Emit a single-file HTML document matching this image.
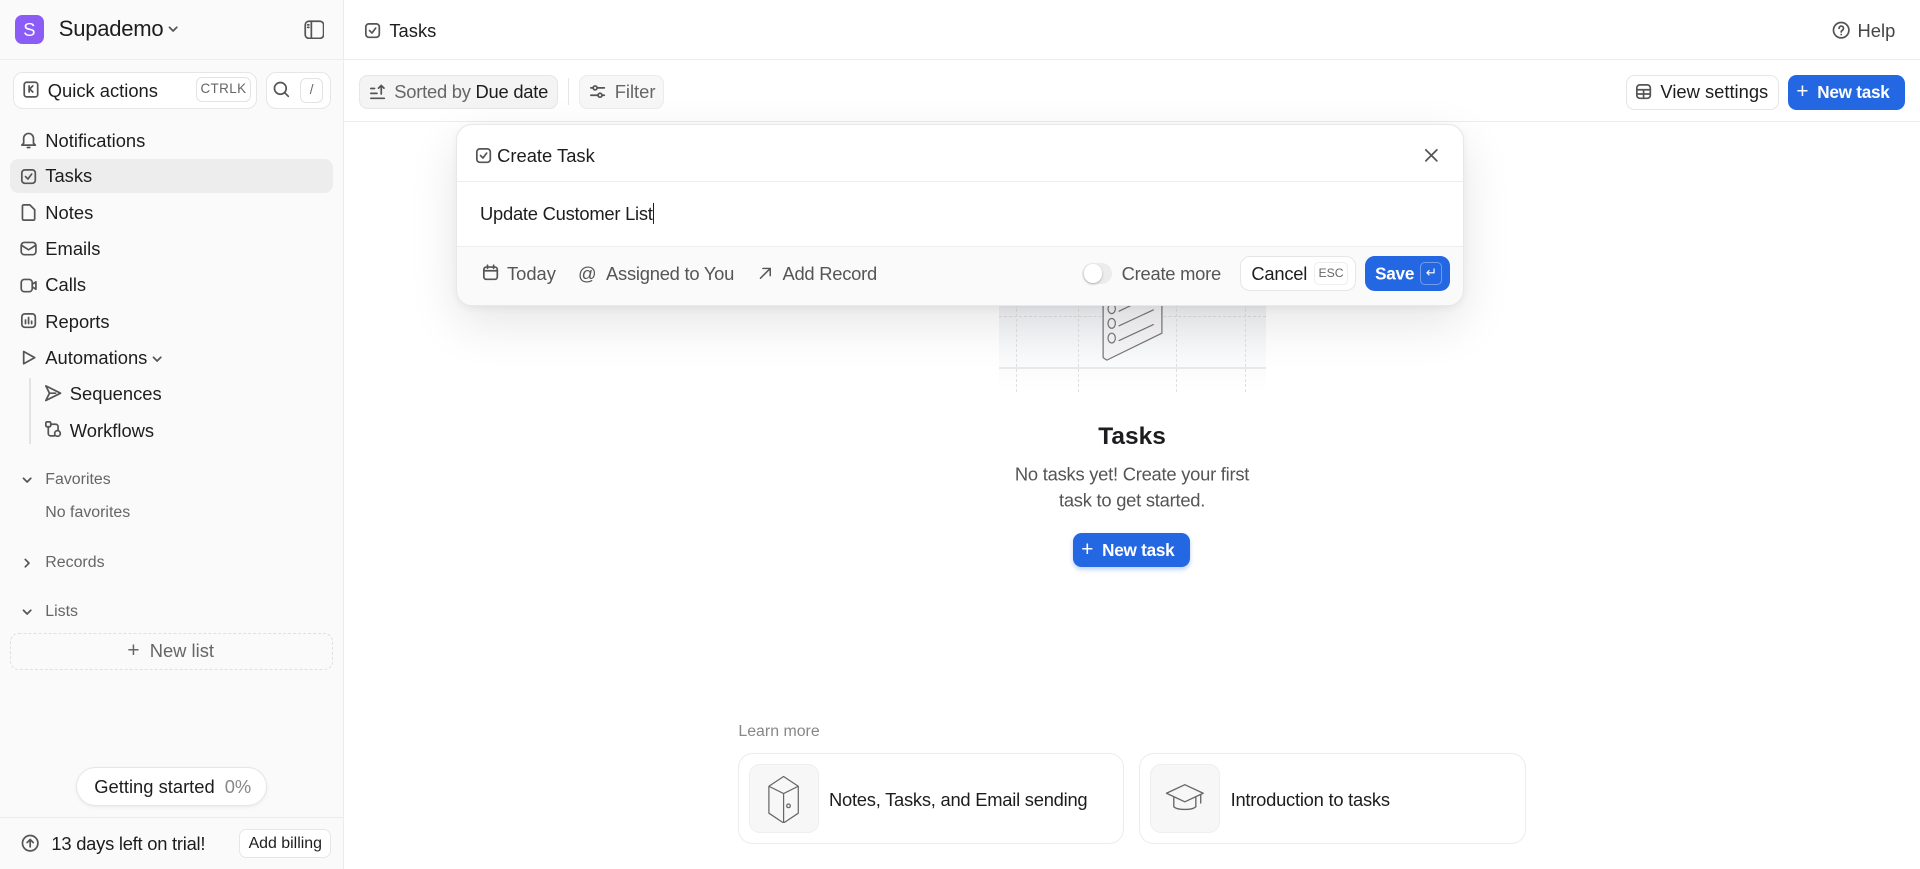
<!DOCTYPE html>
<html><head><meta charset="utf-8"><style>
*{box-sizing:border-box;margin:0;padding:0}
html,body{width:1920px;height:869px;overflow:hidden;background:#fff}
#r{zoom:1.22449;width:1568px;height:710px;position:relative;font-family:"Liberation Sans",sans-serif;color:#1d1d1f;overflow:hidden}
.a{position:absolute}
.t{position:absolute;white-space:nowrap;transform:translateY(-50%)}
svg{position:absolute;fill:none;stroke:#555;stroke-width:1.4;stroke-linecap:round;stroke-linejoin:round}
.btn{position:absolute;border:1px solid #e6e6e6;border-radius:7px;background:#fff}
.blue{position:absolute;background:#2467e3;border-radius:7px;color:#fff}
</style></head><body><div id="r">
<!-- sidebar -->
<div class="a" style="left:0;top:0;width:281px;height:710px;background:#fafafa;border-right:1px solid #ececec"></div>
<div class="a" style="left:12px;top:12px;width:24px;height:24px;border-radius:6px;background:#8b5cf6;color:#fff;font-size:15px;text-align:center;line-height:24px">S</div>
<div class="t" style="left:48px;top:24px;font-size:18px;letter-spacing:-0.2px">Supademo</div>
<svg style="left:136px;top:19px" width="10" height="10"><path d="M2 3.5l3 3 3-3"/></svg>
<svg style="left:248px;top:16px" width="17" height="16"><rect x="1" y="1" width="15" height="14" rx="3"/><path d="M6 1v14M3 4h1M3 6h1"/></svg>
<div class="a" style="left:0;top:48px;width:1568px;height:1px;background:#ededed"></div>
<div class="btn" style="left:11px;top:59px;width:199px;height:30px;border-radius:8px"></div>
<svg style="left:19px;top:66px" width="13" height="14"><rect x="1" y="1" width="11" height="12" rx="2"/><path d="M5 4v5M5 7l3-3M5.5 6.5l2.5 2.5"/></svg>
<div class="t" style="left:39px;top:74px;font-size:15px">Quick actions</div>
<div class="a" style="left:160px;top:63px;width:45px;height:20px;border:1px solid #e3e3e3;border-radius:5px;font-size:11px;color:#666;text-align:center;line-height:18px;letter-spacing:.3px">CTRLK</div>
<div class="btn" style="left:217px;top:59px;width:53px;height:30px;border-radius:8px"></div>
<svg style="left:223px;top:66px" width="14" height="14"><circle cx="6" cy="6" r="4.8"/><path d="M9.5 9.5l3 3"/></svg>
<div class="a" style="left:245px;top:64px;width:19px;height:20px;border:1px solid #e3e3e3;border-radius:5px;font-size:11px;color:#666;text-align:center;line-height:18px">/</div>
<div class="a" style="left:8px;top:130px;width:264px;height:28px;border-radius:7px;background:#ededed"></div>
<svg style="left:16px;top:107px" width="14" height="15"><path d="M3 10V6a4 4 0 018 0v4l1.5 1.5h-11zM6 13.5h2"/></svg>
<div class="t" style="left:37px;top:115px;font-size:15px">Notifications</div>
<svg style="left:16px;top:137px" width="14" height="14"><rect x="1.5" y="1.5" width="11" height="11" rx="2.5"/><path d="M4.5 7l2 2 3-4"/></svg>
<div class="t" style="left:37px;top:144px;font-size:15px">Tasks</div>
<svg style="left:16px;top:166px" width="14" height="15"><path d="M2 2.5a1 1 0 011-1h5l4 4v7.5a1 1 0 01-1 1H3a1 1 0 01-1-1z"/></svg>
<div class="t" style="left:37px;top:174px;font-size:15px">Notes</div>
<svg style="left:16px;top:196px" width="14" height="14"><rect x="1" y="2" width="12" height="10" rx="2.5"/><path d="M1.5 4.5l5.5 3.5 5.5-3.5"/></svg>
<div class="t" style="left:37px;top:203px;font-size:15px">Emails</div>
<svg style="left:16px;top:226px" width="15" height="14"><rect x="1" y="2" width="9" height="10" rx="2.5"/><path d="M10 6l3-2v6l-3-2"/></svg>
<div class="t" style="left:37px;top:233px;font-size:15px">Calls</div>
<svg style="left:16px;top:255px" width="14" height="14"><rect x="1.5" y="1.5" width="11" height="11" rx="2.5"/><path d="M4.5 9.5v-3M7 9.5v-5M9.5 9.5v-2"/></svg>
<div class="t" style="left:37px;top:263px;font-size:15px">Reports</div>
<svg style="left:16px;top:285px" width="14" height="14"><path d="M3 2l9 5-9 5z"/></svg>
<div class="t" style="left:37px;top:292px;font-size:15px">Automations</div>
<svg style="left:123px;top:288px" width="10" height="10"><path d="M2 3.5l3 3 3-3"/></svg>
<div class="a" style="left:24px;top:309px;width:1px;height:54px;background:#e3e3e3"></div>
<svg style="left:36px;top:314px" width="15" height="15"><path d="M1.5 1.5l12 6-12 6 3-6zM4.5 7.5h5"/></svg>
<div class="t" style="left:57px;top:322px;font-size:15px">Sequences</div>
<svg style="left:36px;top:343px" width="15" height="15"><rect x="1.5" y="1.5" width="4" height="4" rx="1"/><circle cx="11" cy="11" r="2.3"/><path d="M5.5 3.5h4a2 2 0 012 2V8M3.5 5.5V11a2 2 0 002 2h3"/></svg>
<div class="t" style="left:57px;top:352px;font-size:15px">Workflows</div>
<svg style="left:17px;top:387px" width="10" height="10"><path d="M2 3.5l3 3 3-3"/></svg>
<div class="t" style="left:37px;top:392px;font-size:13px;color:#666">Favorites</div>
<div class="t" style="left:37px;top:419px;font-size:13px;color:#666">No favorites</div>
<svg style="left:17px;top:455px" width="10" height="10"><path d="M3.5 2l3 3-3 3"/></svg>
<div class="t" style="left:37px;top:460px;font-size:13px;color:#666">Records</div>
<svg style="left:17px;top:495px" width="10" height="10"><path d="M2 3.5l3 3 3-3"/></svg>
<div class="t" style="left:37px;top:500px;font-size:13px;color:#666">Lists</div>
<div class="a" style="left:8px;top:517px;width:264px;height:30px;border:1px dashed #e0e0e0;border-radius:7px"></div>
<div class="t" style="left:104px;top:532px;font-size:15px;color:#666"><span style="font-size:17px">+</span>&nbsp; New list</div>
<div class="a" style="left:62px;top:626px;width:156px;height:32px;border:1px solid #e6e6e6;border-radius:16px;background:#fff;box-shadow:0 1px 3px rgba(0,0,0,.06)"></div>
<div class="t" style="left:77px;top:643px;font-size:15px">Getting started <span style="color:#888;margin-left:4px">0%</span></div>
<div class="a" style="left:0;top:667px;width:281px;height:1px;background:#ececec"></div>
<svg style="left:17px;top:681px" width="15" height="15"><circle cx="7.5" cy="7.5" r="6.3"/><path d="M7.5 10.5v-6M5 7l2.5-2.5L10 7"/></svg>
<div class="t" style="left:42px;top:689px;font-size:15px;letter-spacing:-0.2px">13 days left on trial!</div>
<div class="btn" style="left:195px;top:677px;width:75px;height:24px;border-radius:6px"></div>
<div class="t" style="left:203px;top:689px;font-size:13px">Add billing</div>
<!-- main header -->
<svg style="left:297px;top:18px" width="14" height="14"><rect x="1.5" y="1.5" width="11" height="11" rx="2.5"/><path d="M4.5 7l2 2 3-4"/></svg>
<div class="t" style="left:318px;top:25px;font-size:15px">Tasks</div>
<svg style="left:1496px;top:17px" width="15" height="15"><circle cx="7.5" cy="7.5" r="6.3"/><path d="M5.8 6a1.8 1.8 0 113 1.3c-.8.5-1.3.8-1.3 1.7M7.5 11v.1"/></svg>
<div class="t" style="left:1517px;top:25px;font-size:15px;color:#444">Help</div>
<div class="a" style="left:293px;top:61px;width:163px;height:28px;border:1px solid #e6e6e6;border-radius:7px;background:#f4f4f4"></div>
<svg style="left:301px;top:68px" width="14" height="14"><path d="M1.5 12.5h11M1.5 8.5h5M1.5 4.5h3M10 9V2M7.8 4.2L10 2l2.2 2.2"/></svg>
<div class="t" style="left:322px;top:75px;font-size:15px;color:#666;letter-spacing:-0.2px">Sorted by <span style="color:#1d1d1f">Due date</span></div>
<div class="a" style="left:464px;top:64px;width:1px;height:22px;background:#e6e6e6"></div>
<div class="a" style="left:473px;top:61px;width:69px;height:28px;border:1px solid #ececec;border-radius:7px;background:#f7f7f7"></div>
<svg style="left:481px;top:68px" width="14" height="14"><path d="M1.5 4h11M1.5 10h11"/><circle cx="5" cy="4" r="1.6" fill="#f7f7f7"/><circle cx="9" cy="10" r="1.6" fill="#f7f7f7"/></svg>
<div class="t" style="left:502px;top:75px;font-size:15px;color:#666">Filter</div>
<div class="a" style="left:281px;top:99px;width:1287px;height:1px;background:#ededed"></div>
<div class="btn" style="left:1328px;top:61px;width:125px;height:29px"></div>
<svg style="left:1335px;top:68px" width="14" height="14"><rect x="1.5" y="1.5" width="11" height="11" rx="2.5"/><path d="M1.5 5.5h11M1.5 9h11M7 5.5v7"/></svg>
<div class="t" style="left:1356px;top:75px;font-size:15px">View settings</div>
<div class="blue" style="left:1460px;top:61px;width:96px;height:29px"></div>
<div class="t" style="left:1467px;top:75px;font-size:14px;color:#fff;font-weight:600;letter-spacing:-0.2px"><span style="font-weight:400;font-size:17px">+</span>&nbsp; New task</div>
<!-- illustration -->
<div class="a" style="left:816px;top:240px;width:218px;height:80px;background:linear-gradient(#eef0f3,#fff)"></div>
<div class="a" style="left:816px;top:258px;width:218px;height:0;border-top:1px dashed #dcdcdc"></div>
<div class="a" style="left:816px;top:300px;width:218px;height:1px;background:#e8e8e8"></div>
<div class="a" style="left:830px;top:240px;height:80px;border-left:1px dashed #e0e0e0"></div>
<div class="a" style="left:880px;top:240px;height:80px;border-left:1px dashed #e0e0e0"></div>
<div class="a" style="left:960px;top:240px;height:80px;border-left:1px dashed #e0e0e0"></div>
<div class="a" style="left:1017px;top:240px;height:80px;border-left:1px dashed #e0e0e0"></div>
<svg style="left:896px;top:240px;stroke:#777;stroke-width:1" width="60" height="58"><path d="M5 0v52l3 2 45-22V0" fill="#f4f4f6"/><ellipse cx="12" cy="12" rx="3" ry="4"/><ellipse cx="12" cy="24" rx="3" ry="4"/><ellipse cx="12" cy="36" rx="3" ry="4"/><path d="M18 14l25-12M18 26l28-13M18 38l28-13"/></svg>
<!-- modal -->
<div class="a" style="left:372px;top:101px;width:824px;height:149px;background:#fff;border:1px solid #e8e8e8;border-radius:13px;box-shadow:0 14px 40px rgba(0,0,0,.10),0 2px 6px rgba(0,0,0,.05);overflow:hidden">
<div class="a" style="left:0;top:99px;width:824px;height:50px;background:#fafafa;border-top:1px solid #ededed"></div>
<div class="a" style="left:0;top:46px;width:824px;height:1px;background:#ededed"></div>
</div>
<svg style="left:388px;top:120px" width="14" height="14"><rect x="1.5" y="1.5" width="11" height="11" rx="2.5"/><path d="M4.5 7l2 2 3-4"/></svg>
<div class="t" style="left:406px;top:127px;font-size:15px">Create Task</div>
<svg style="left:1163px;top:121px" width="12" height="12"><path d="M1.5 1.5l9 9M10.5 1.5l-9 9"/></svg>
<div class="t" style="left:392px;top:175px;font-size:15px;letter-spacing:-0.2px">Update Customer List<span style="display:inline-block;width:1px;height:17px;background:#1d1d1f;vertical-align:-3px"></span></div>
<svg style="left:394px;top:216px" width="14" height="14"><rect x="1.5" y="2.5" width="11" height="10" rx="2"/><path d="M1.5 5.5h11M4.5 1v2.5M9.5 1v2.5"/></svg>
<div class="t" style="left:414px;top:224px;font-size:15px;color:#555">Today</div>
<div class="t" style="left:472px;top:224px;font-size:15px;color:#555;letter-spacing:-0.2px">@&nbsp;&nbsp;Assigned to You</div>
<svg style="left:619px;top:217px" width="12" height="12"><path d="M2 10l8-8M4 2h6v6" style="stroke-width:1.2"/></svg>
<div class="t" style="left:639px;top:224px;font-size:15px;color:#555;letter-spacing:-0.2px">Add Record</div>
<div class="a" style="left:884px;top:215px;width:24px;height:17px;border-radius:9px;background:#ececec"></div>
<div class="a" style="left:885px;top:216px;width:15px;height:15px;border-radius:50%;background:#fff;box-shadow:0 1px 2px rgba(0,0,0,.25)"></div>
<div class="t" style="left:916px;top:224px;font-size:15px;color:#555;letter-spacing:-0.2px">Create more</div>
<div class="btn" style="left:1013px;top:209px;width:94px;height:29px;border-radius:8px"></div>
<div class="t" style="left:1022px;top:224px;font-size:15px;letter-spacing:-0.2px">Cancel</div>
<div class="a" style="left:1073px;top:214px;width:28px;height:19px;border:1px solid #eee;border-radius:4px;font-size:10px;color:#666;text-align:center;line-height:17px">ESC</div>
<div class="blue" style="left:1115px;top:209px;width:69px;height:29px;border-radius:8px"></div>
<div class="t" style="left:1123px;top:224px;font-size:14px;color:#fff;font-weight:600;letter-spacing:-0.2px">Save</div>
<div class="a" style="left:1160px;top:214px;width:18px;height:19px;border:1px solid rgba(255,255,255,.35);border-radius:4px;color:#fff;font-size:11px;text-align:center;line-height:17px">↵</div>
<!-- empty state -->
<div class="t" style="left:0;width:1849px;text-align:center;top:357px;font-size:20px;font-weight:600">Tasks</div>
<div class="t" style="left:0;width:1849px;text-align:center;top:398px;font-size:15px;color:#555;line-height:21px;white-space:normal;letter-spacing:-0.2px">No tasks yet! Create your first<br>task to get started.</div>
<div class="blue" style="left:876px;top:435px;width:96px;height:28px;box-shadow:0 2px 4px rgba(36,103,227,.3)"></div>
<div class="t" style="left:883px;top:449px;font-size:14px;color:#fff;font-weight:600;letter-spacing:-0.2px"><span style="font-weight:400;font-size:17px">+</span>&nbsp; New task</div>
<div class="t" style="left:603px;top:598px;font-size:13px;color:#888">Learn more</div>
<div class="a" style="left:603px;top:615px;width:315px;height:74px;border:1px solid #ececec;border-radius:12px"></div>
<div class="a" style="left:612px;top:624px;width:57px;height:56px;border:1px solid #eee;border-radius:9px;background:#f7f7f7"></div>
<svg style="left:624px;top:632px;stroke:#666;stroke-width:1" width="32" height="40"><path d="M4 10l12-8 12 8v22l-12 8-12-8z M4 10l12 6 12-6M16 16v24"/><circle cx="20" cy="26" r="1.5"/></svg>
<div class="t" style="left:677px;top:653px;font-size:15px;letter-spacing:-0.2px">Notes, Tasks, and Email sending</div>
<div class="a" style="left:930px;top:615px;width:316px;height:74px;border:1px solid #ececec;border-radius:12px"></div>
<div class="a" style="left:939px;top:624px;width:57px;height:56px;border:1px solid #eee;border-radius:9px;background:#f7f7f7"></div>
<svg style="left:951px;top:638px;stroke:#666;stroke-width:1.1" width="34" height="28"><path d="M2 10l15-7 15 7-15 7zM8 13v8c3 3 15 3 18 0v-8M30 11v7"/></svg>
<div class="t" style="left:1005px;top:653px;font-size:15px;letter-spacing:-0.2px">Introduction to tasks</div>
</div></body></html>
